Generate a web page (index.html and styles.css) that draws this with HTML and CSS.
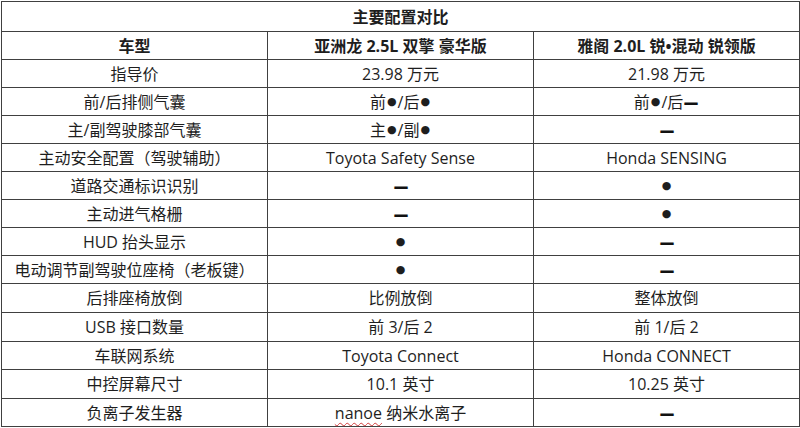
FILE: index.html
```html
<!DOCTYPE html>
<html lang="zh-CN">
<head>
<meta charset="utf-8">
<title>主要配置对比</title>
<link rel="stylesheet" href="styles.css">
</head>
<body>
<div class="table">
  <div class="cell title">主要配置对比</div>
  <div class="cell head">车型</div>
  <div class="cell head">亚洲龙 2.5L 双擎 豪华版</div>
  <div class="cell head">雅阁 2.0L 锐•混动 锐领版</div>

  <div class="cell">指导价</div>
  <div class="cell">23.98 万元</div>
  <div class="cell">21.98 万元</div>

  <div class="cell">前/后排侧气囊</div>
  <div class="cell">前<span class="dot">●</span>/后<span class="dot">●</span></div>
  <div class="cell">前<span class="dot">●</span>/后<span class="dash">–</span></div>

  <div class="cell">主/副驾驶膝部气囊</div>
  <div class="cell">主<span class="dot">●</span>/副<span class="dot">●</span></div>
  <div class="cell"><span class="dash">–</span></div>

  <div class="cell">主动安全配置（驾驶辅助）</div>
  <div class="cell">Toyota Safety Sense</div>
  <div class="cell">Honda SENSING</div>

  <div class="cell">道路交通标识识别</div>
  <div class="cell"><span class="dash">–</span></div>
  <div class="cell"><span class="dot">●</span></div>

  <div class="cell">主动进气格栅</div>
  <div class="cell"><span class="dash">–</span></div>
  <div class="cell"><span class="dot">●</span></div>

  <div class="cell">HUD 抬头显示</div>
  <div class="cell"><span class="dot">●</span></div>
  <div class="cell"><span class="dash">–</span></div>

  <div class="cell">电动调节副驾驶位座椅（老板键）</div>
  <div class="cell"><span class="dot">●</span></div>
  <div class="cell"><span class="dash">–</span></div>

  <div class="cell">后排座椅放倒</div>
  <div class="cell">比例放倒</div>
  <div class="cell">整体放倒</div>

  <div class="cell">USB 接口数量</div>
  <div class="cell">前 3/后 2</div>
  <div class="cell">前 1/后 2</div>

  <div class="cell">车联网系统</div>
  <div class="cell">Toyota Connect</div>
  <div class="cell">Honda CONNECT</div>

  <div class="cell">中控屏幕尺寸</div>
  <div class="cell">10.1 英寸</div>
  <div class="cell">10.25 英寸</div>

  <div class="cell">负离子发生器</div>
  <div class="cell"><span class="spell">nanoe</span>&nbsp;纳米水离子</div>
  <div class="cell"><span class="dash">–</span></div>
</div>
</body>
</html>
```
FILE: styles.css
```css
html, body {
  margin: 0;
  padding: 0;
  background: #ffffff;
}

body {
  font-family: "Open Sans", "Noto Sans CJK SC", sans-serif;
  font-size: 16px;
  color: #1e1e1e;
}

.table {
  margin: 1px 0 0 1px;
  width: 797px;
  padding: 1px;
  display: grid;
  grid-template-columns: 265px 265px 265px;
  grid-template-rows: 29px 27px 27px 27px 27px 27px 27px 27px 27px 27px 28px 28px 27px 28px 27px;
  gap: 1px;
  background: #404040;
}

.cell {
  background: #ffffff;
  display: flex;
  align-items: center;
  justify-content: center;
  white-space: nowrap;
  line-height: 1;
}

.title {
  grid-column: 1 / -1;
  font-weight: bold;
}

.head {
  font-weight: bold;
}

.dot {
  font-family: "DejaVu Sans", sans-serif;
  font-size: 11px;
  margin: 0 1px;
}

.dash {
  display: inline-block;
  font-family: "DejaVu Sans", sans-serif;
  font-weight: bold;
  font-size: 20px;
  color: #111111;
  transform: scaleX(1.7);
  margin: 0 3px;
}

.spell {
  text-decoration: underline wavy #d23c3c;
  text-decoration-thickness: 1px;
  text-underline-offset: 3px;
}
```
